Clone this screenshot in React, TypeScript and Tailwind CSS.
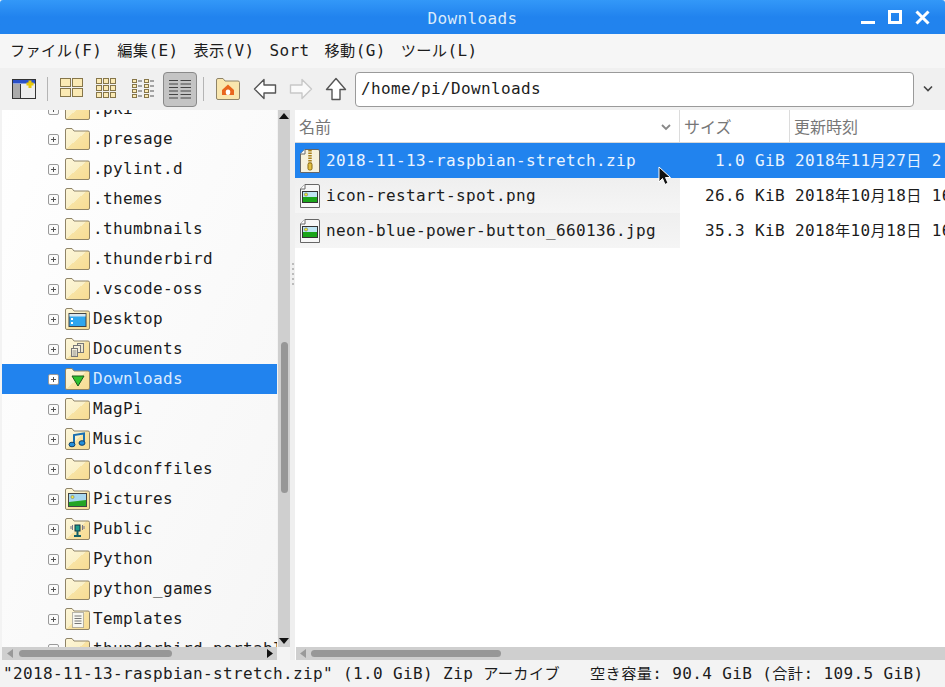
import React from "react";

const mono = { fontFamily: '"DejaVu Sans Mono","Noto Sans CJK JP",monospace' };

function J({ children }: { children: React.ReactNode }) {
  return <span className="text-[15.2px]">{children}</span>;
}

function Folder({ overlay }: { overlay?: React.ReactNode }) {
  return (
    <svg width="25" height="22" viewBox="0 0 25 22" className="shrink-0">
      <defs>
        <linearGradient id="fg" x1="0" y1="0" x2="1" y2="1">
          <stop offset="0" stopColor="#fdf6d8" />
          <stop offset="0.5" stopColor="#faf0c8" />
          <stop offset="0.5" stopColor="#f8e3a4" />
          <stop offset="1" stopColor="#f8dc92" />
        </linearGradient>
      </defs>
      <path d="M0.5 20V2Q0.5 0.5 2 0.5H7L9 3H23Q24.5 3 24.5 4.5V20Q24.5 21.5 23 21.5H2Q0.5 21.5 0.5 20Z" fill="url(#fg)" stroke="#8f8468" />
      {overlay}
    </svg>
  );
}

function Expander({ active }: { active?: boolean }) {
  return (
    <span className={`relative w-[11px] h-[11px] shrink-0 rounded-[2px] border border-[#9a9a9a] ${active ? "bg-white" : "bg-[#fafafa]"}`}>
      <span className="absolute left-[2px] top-[4px] w-[5px] h-px bg-[#555]" />
      <span className="absolute left-[4px] top-[2px] w-px h-[5px] bg-[#555]" />
    </span>
  );
}

const overlays: Record<string, React.ReactNode> = {
  Desktop: (
    <g>
      <rect x="4" y="5.5" width="17" height="13" fill="#2fa6ee" stroke="#444" />
      <rect x="4.5" y="6" width="16" height="2.5" fill="#d8e6ef" />
      <rect x="6" y="10" width="2" height="2" fill="#fff" />
      <rect x="6" y="14" width="2" height="2" fill="#fff" />
    </g>
  ),
  Documents: (
    <g stroke="#777">
      <rect x="12.5" y="5.5" width="6" height="9" fill="#efe8d0" />
      <rect x="8.5" y="7.5" width="7" height="7" fill="#f6f0dc" />
      <rect x="6.5" y="10.5" width="6" height="8" fill="#f6f0dc" />
      <path d="M7.5 13H11.5M7.5 15H11.5M7.5 17H11.5" strokeWidth="0.8" />
    </g>
  ),
  Downloads: <path d="M7 8H19L13 18Z" fill="#2fc22f" stroke="#1b5a1b" />,
  Music: (
    <g fill="#2390dc" stroke="#123f66" strokeWidth="1">
      <path d="M9 16V7L19 5.5V14" fill="none" stroke="#1a6fb0" strokeWidth="2" />
      <ellipse cx="7" cy="16.5" rx="3" ry="2.3" />
      <ellipse cx="17" cy="15" rx="3" ry="2.3" />
    </g>
  ),
  Pictures: (
    <g>
      <rect x="3.5" y="5.5" width="18" height="13" fill="#a8d8ef" stroke="#444" />
      <path d="M4 14L21 12V18H4Z" fill="#25a525" />
      <circle cx="7.5" cy="9" r="1.6" fill="#f2e83a" stroke="#666" strokeWidth="0.5" />
    </g>
  ),
  Public: (
    <g>
      <rect x="10" y="7" width="5" height="6" fill="#1c9a8c" stroke="#134" />
      <path d="M12.5 13V17M9 18H16" stroke="#135f66" strokeWidth="2" />
      <path d="M7.5 7V12M17.5 7V12M6 8V11M19 8V11" stroke="#778" />
    </g>
  ),
  Templates: (
    <g>
      <rect x="7.5" y="4.5" width="11" height="15" fill="#f7f7f0" stroke="#777" strokeDasharray="1 1" />
      <path d="M9.5 8H16.5M9.5 10.5H16.5M9.5 13H16.5M9.5 15.5H16.5" stroke="#777" />
    </g>
  ),
};

const tree = [".pki", ".presage", ".pylint.d", ".themes", ".thumbnails", ".thunderbird", ".vscode-oss", "Desktop", "Documents", "Downloads", "MagPi", "Music", "oldconffiles", "Pictures", "Public", "Python", "python_games", "Templates", "thunderbird-portable"];

function FileIcon({ zip }: { zip?: boolean }) {
  return (
    <svg width="20" height="24" viewBox="0 0 20 24" className="shrink-0">
      <path d="M0.5 5L5 0.5H18Q19.5 0.5 19.5 2V23.5H0.5Z" fill={zip ? "#f7f1dc" : "#f7f7f7"} stroke="#666" />
      <path d="M0.5 5H5V0.5" fill="#fff" stroke="#666" />
      {zip ? (
        <g>
          <path d="M10 1V15" stroke="#a8801c" strokeWidth="3.5" strokeDasharray="1.5 1" />
          <rect x="8" y="14" width="4" height="7" rx="1.5" fill="#e4c040" stroke="#8a6a10" />
        </g>
      ) : (
        <g>
          <rect x="2.5" y="7.5" width="15" height="11" fill="#bfe6f4" stroke="#333" />
          <path d="M3 13H17V18H3Z" fill="#1aa51a" />
          <circle cx="6" cy="10.5" r="1.6" fill="#f6ec30" stroke="#555" strokeWidth="0.5" />
        </g>
      )}
    </svg>
  );
}

function GridIcon({ cols, rows, w, h, gap }: { cols: number; rows: number; w: number; h: number; gap: number }) {
  const items = [];
  for (let r = 0; r < rows; r++)
    for (let c = 0; c < cols; c++)
      items.push(<rect key={`${r}-${c}`} x={0.5 + c * (w + gap)} y={0.5 + r * (h + gap)} width={w} height={h} fill="#fbeab4" stroke="#86764a" />);
  return <svg width="24" height="22" viewBox="0 0 24 22">{items}</svg>;
}

function CompactIcon() {
  const items = [];
  for (let r = 0; r < 4; r++)
    for (let c = 0; c < 2; c++)
      items.push(
        <g key={`${r}-${c}`}>
          <rect x={0.5 + c * 12} y={1.5 + r * 5} width="4" height="3" fill="#fbeab4" stroke="#86764a" />
          <path d={`M${6 + c * 12} ${3 + r * 5}h4`} stroke="#555" />
        </g>
      );
  return <svg width="24" height="22" viewBox="0 0 24 22">{items}</svg>;
}

function Sep() {
  return <span className="block w-px h-[24px] bg-[#b4b4b4]" />;
}

function Row({ name, size, date, sel, i }: { name: string; size: string; date: React.ReactNode; sel?: boolean; i: number }) {
  return (
    <div className={`flex h-[35px] items-center whitespace-nowrap ${sel ? "bg-[#2183ee] text-[#eaf4ff]" : "text-[#1c1c1c]"}`}>
      <div className={`w-[385px] h-full shrink-0 flex items-center pl-[5px] gap-[6px] ${sel ? "" : "bg-gradient-to-b from-[#efefef] to-[#f5f5f5]"}`}>
        <FileIcon zip={i === 0} />
        <span className="pt-[1px]">{name}</span>
      </div>
      <div className="w-[105px] shrink-0 text-right pt-[1px]">{size}</div>
      <div className="pl-[10px] shrink-0 pt-[1px]">{date}</div>
    </div>
  );
}

export default function App() {
  return (
    <div className="w-[945px] h-[687px] overflow-hidden flex flex-col bg-[#f3f3f3] text-[16px] tracking-[0.37px] text-[#1c1c1c]" style={mono}>
      {/* Title bar */}
      <div className="relative h-[34px] shrink-0 flex items-center justify-center pt-[3px] bg-gradient-to-b from-[#3398f8] via-[#2183ee] to-[#2183ee] text-[#dcebfb] rounded-t-[3px]">
        <span>Downloads</span>
        <div className="absolute right-[15px] top-[10px] flex items-start gap-[13px]">
          <span className="mt-[11px] w-[14px] h-[3px] bg-white" />
          <span className="w-[14px] h-[14px] border-[3px] border-white" />
          <svg width="15" height="15" viewBox="0 0 15 15"><path d="M1.5 1.5L13.5 13.5M13.5 1.5L1.5 13.5" stroke="#fff" strokeWidth="3" /></svg>
        </div>
      </div>
      {/* Menu */}
      <div className="h-[34px] shrink-0 flex items-center pl-[10px] gap-[15px] bg-[#f6f6f6]">
        <span><J>ファイル</J>(F)</span>
        <span><J>編集</J>(E)</span>
        <span><J>表示</J>(V)</span>
        <span>Sort</span>
        <span><J>移動</J>(G)</span>
        <span><J>ツール</J>(L)</span>
      </div>
      {/* Toolbar */}
      <div className="h-[42px] shrink-0 flex items-center pl-[12px] bg-[#f0f0f0]">
        <svg width="24" height="20" viewBox="0 0 24 20">
          <rect x="0.5" y="0.5" width="23" height="19" fill="#eee" stroke="#333" />
          <rect x="1" y="1" width="22" height="3.5" fill="#2a50c8" />
          <rect x="1" y="5" width="7" height="14" fill="#aaa" />
          <path d="M8.5 5V19" stroke="#333" />
          <path d="M18 1.5V9M14.5 5H21.5" stroke="#e8c808" strokeWidth="3" />
        </svg>
        <span className="ml-[11px] mr-[12px]"><Sep /></span>
        <span className="flex items-center gap-[12px]">
          <GridIcon cols={2} rows={2} w={10} h={8} gap={2} />
          <GridIcon cols={3} rows={3} w={5} h={5} gap={2} />
          <CompactIcon />
        </span>
        <span className="ml-[7px] w-[34px] h-[35px] flex items-center justify-center rounded-[4px] border border-[#8a8a8a] bg-[#c4c4c4]">
          <svg width="24" height="22" viewBox="0 0 24 22">
            <path d="M1 2.5H10M12.5 2.5H23M1 6H10M12.5 6H23M1 9.5H10M12.5 9.5H23M1 13H10M12.5 13H23M1 16.5H10M12.5 16.5H23M1 20H10M12.5 20H23" stroke="#444" />
          </svg>
        </span>
        <span className="ml-[6px] mr-[12px]"><Sep /></span>
        <svg width="24" height="22" viewBox="0 0 24 22">
          <path d="M0.5 20V2Q0.5 0.5 2 0.5H7L9 3H22Q23.5 3 23.5 4.5V20Q23.5 21.5 22 21.5H2Q0.5 21.5 0.5 20Z" fill="#f9e6ae" stroke="#8f8468" />
          <path d="M12 6.5L18 12V17H6V12Z" fill="#e8661e" />
          <rect x="9.8" y="11.5" width="4.4" height="5.5" rx="2" fill="#fff" />
        </svg>
        <svg width="24" height="22" viewBox="0 0 24 22" className="ml-[13px]">
          <path d="M11 1.5L1.5 11L11 20.5V15H22.5V7H11Z" fill="#fff" stroke="#555" strokeWidth="1.4" strokeLinejoin="round" />
        </svg>
        <svg width="24" height="22" viewBox="0 0 24 22" className="ml-[12px]">
          <path d="M13 1.5L22.5 11L13 20.5V15H1.5V7H13Z" fill="#fafafa" stroke="#c8c8c8" strokeWidth="1.4" strokeLinejoin="round" />
        </svg>
        <svg width="22" height="24" viewBox="0 0 22 24" className="ml-[12px]">
          <path d="M1.5 12.5L11 1.5L20.5 12.5H15V22.5H7V12.5Z" fill="#fff" stroke="#555" strokeWidth="1.4" strokeLinejoin="round" />
        </svg>
        <div className="ml-[8px] w-[559px] h-[35px] rounded-[4px] border border-[#9a9a9a] bg-white flex items-center pl-[5px]">/home/pi/Downloads</div>
        <svg width="12" height="8" viewBox="0 0 12 8" className="ml-[8px]"><path d="M2 1.5L6 5.5L10 1.5" fill="none" stroke="#444" strokeWidth="1.6" /></svg>
      </div>
      {/* Main */}
      <div className="flex-1 min-h-0 flex pl-[2px]">
        {/* Tree */}
        <div className="w-[288px] shrink-0 flex flex-col">
          <div className="flex-1 min-h-0 flex">
            <div className="w-[275px] overflow-hidden bg-gradient-to-br from-white to-[#f6f6f6]">
              <div className="mt-[-16px]">
                {tree.map((t) => (
                  <div key={t} className={`h-[30px] flex items-center whitespace-nowrap pl-[46px] ${t === "Downloads" ? "bg-[#2183ee] text-[#dcecff]" : ""}`}>
                    <Expander active={t === "Downloads"} />
                    <span className="ml-[6px]"><Folder overlay={overlays[t]} /></span>
                    <span className="ml-[3px]">{t}</span>
                  </div>
                ))}
              </div>
            </div>
            <div className="ml-[1px] w-[12px] bg-[#cfcfcf] flex flex-col items-center">
              <svg width="10" height="6" viewBox="0 0 10 6" className="mt-[3px]"><path d="M0 6L5 0L10 6Z" fill="#111" /></svg>
              <div className="mt-[223px] w-[7px] h-[151px] rounded-full bg-[#979797]" />
              <div className="flex-1" />
              <svg width="10" height="6" viewBox="0 0 10 6" className="mb-[3px]"><path d="M0 0L5 6L10 0Z" fill="#111" /></svg>
            </div>
          </div>
          <div className="h-[13px] shrink-0 flex items-center bg-[#cfcfcf] mr-[13px] pl-[5px] pr-[4px]">
            <svg width="6" height="9" viewBox="0 0 6 9"><path d="M6 0L0 4.5L6 9Z" fill="#999" /></svg>
            <div className="ml-[6px] w-[153px] h-[7px] rounded-full bg-[#979797]" />
            <div className="flex-1" />
            <svg width="6" height="9" viewBox="0 0 6 9"><path d="M0 0L6 4.5L0 9Z" fill="#111" /></svg>
          </div>
        </div>
        {/* Splitter */}
        <div className="w-[5px] shrink-0 flex flex-col items-center justify-start gap-[3px] pt-[153px] bg-[#efefef]">
          {[0, 1, 2, 3, 4].map((i) => <span key={i} className="w-[2px] h-[2px] bg-[#bcbcbc]" />)}
        </div>
        {/* List */}
        <div className="flex-1 min-w-0 flex flex-col bg-white overflow-hidden relative">
          <div className="flex-1 min-h-0">
            <div className="h-[33px] flex border-b border-[#d8d8d8] text-[#777] tracking-normal">
              <div className="w-[385px] shrink-0 flex items-center justify-between pl-[4px] pr-[8px] pt-[3px] border-r border-[#dcdcdc]">
                <span>名前</span>
                <svg width="10" height="7" viewBox="0 0 10 7"><path d="M1 1L5 5L9 1" fill="none" stroke="#888" strokeWidth="1.8" /></svg>
              </div>
              <div className="w-[110px] shrink-0 flex items-center pl-[4px] pt-[3px] border-r border-[#dcdcdc]">サイズ</div>
              <div className="flex items-center pl-[4px] pt-[3px]">更新時刻</div>
            </div>
            <Row i={0} sel name="2018-11-13-raspbian-stretch.zip" size="1.0 GiB" date={<>2018<J>年</J>11<J>月</J>27<J>日</J> 2</>} />
            <Row i={1} name="icon-restart-spot.png" size="26.6 KiB" date={<>2018<J>年</J>10<J>月</J>18<J>日</J> 16</>} />
            <Row i={2} name="neon-blue-power-button_660136.jpg" size="35.3 KiB" date={<>2018<J>年</J>10<J>月</J>18<J>日</J> 16</>} />
          </div>
          <div className="h-[13px] shrink-0 flex items-center bg-[#cfcfcf] ml-[1px] pl-[4px]">
            <svg width="6" height="9" viewBox="0 0 6 9"><path d="M6 0L0 4.5L6 9Z" fill="#999" /></svg>
            <div className="ml-[5px] w-[190px] h-[7px] rounded-full bg-[#979797]" />
          </div>
          <svg width="14" height="20" viewBox="0 0 14 20" className="absolute left-[363px] top-[56px]">
            <path d="M1 1V16L4.5 12.5L7 18.5L10 17L7.5 11.5H12.5Z" fill="#111" stroke="#fff" />
          </svg>
        </div>
      </div>
      {/* Status */}
      <div className="h-[27px] shrink-0 flex items-center pl-[3px] pt-[1px] whitespace-nowrap bg-[#f3f3f3]">
        <span>"2018-11-13-raspbian-stretch.zip" (1.0 GiB) Zip <J>アーカイブ</J></span>
        <span className="ml-[30px]"><J>空き容量</J>: 90.4 GiB (<J>合計</J>: 109.5 GiB)</span>
      </div>
    </div>
  );
}
